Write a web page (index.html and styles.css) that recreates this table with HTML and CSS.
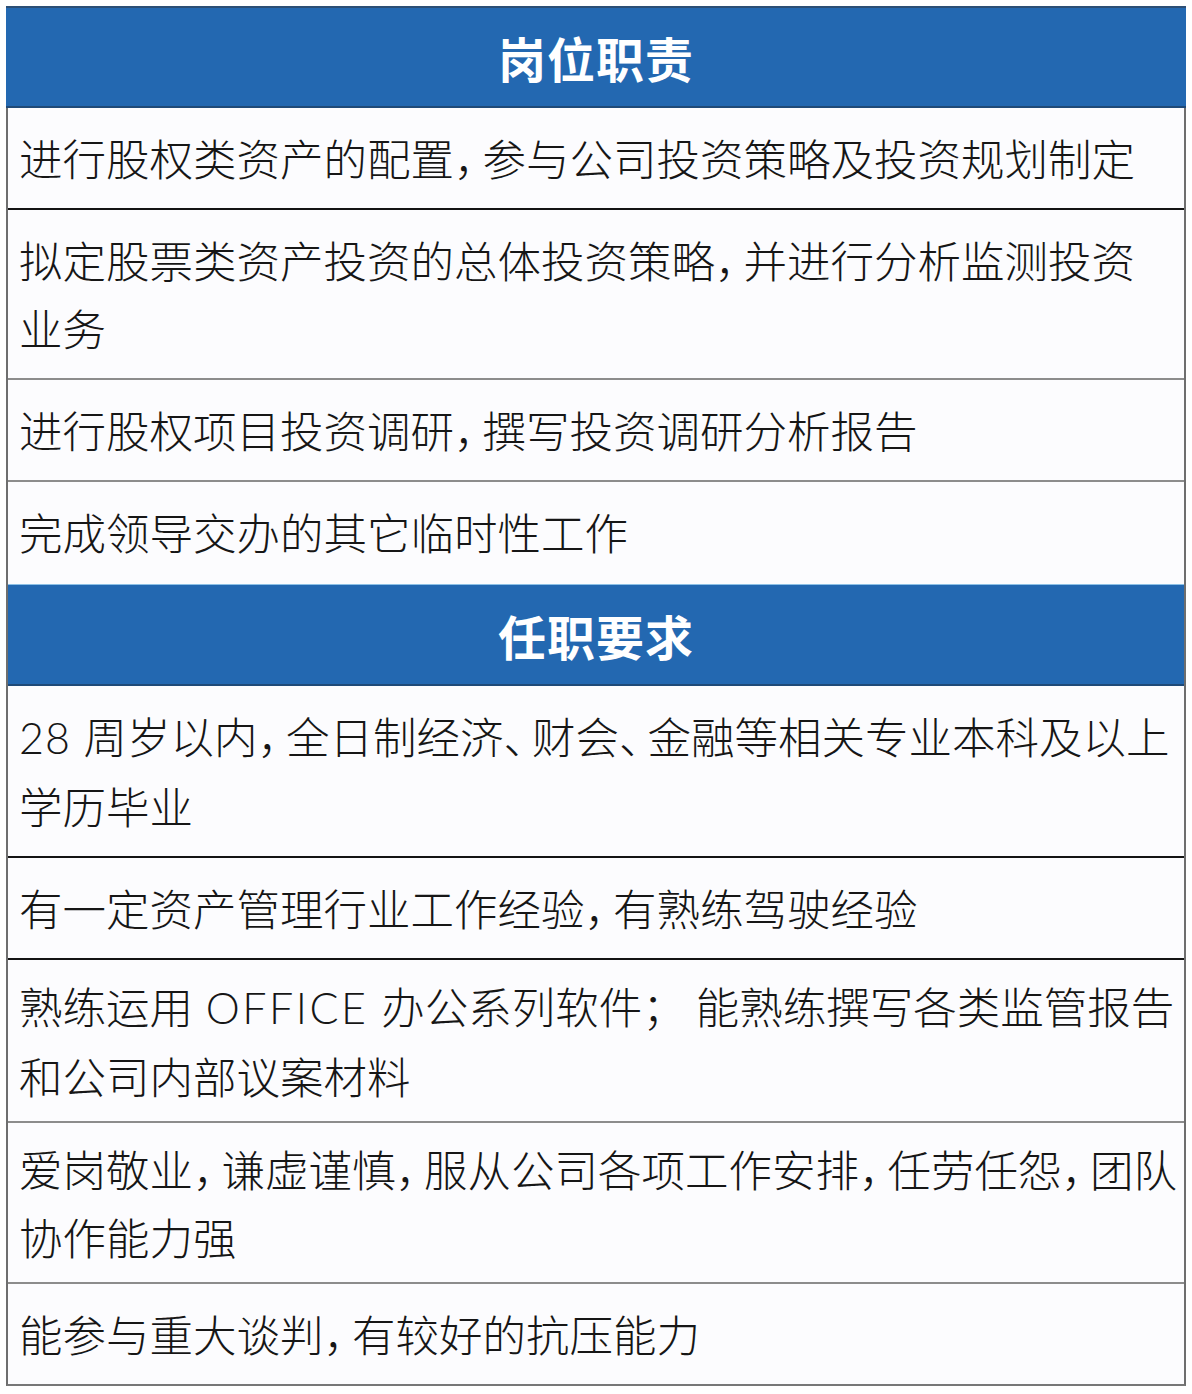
FILE: index.html
```html
<!DOCTYPE html>
<html lang="zh-CN">
<head>
<meta charset="utf-8">
<title>岗位职责 / 任职要求</title>
<link rel="stylesheet" href="styles.css">
</head>
<body>
<div class="sheet">
  <div class="head head-first">岗位职责</div>
  <div class="cell line-dark">进行股权类资产的配置<span class="pc">，</span>参与公司投资策略及投资规划制定</div>
  <div class="cell line-grey">拟定股票类资产投资的总体投资策略<span class="pc">，</span>并进行分析监测投资<br>业务</div>
  <div class="cell line-grey">进行股权项目投资调研<span class="pc">，</span>撰写投资调研分析报告</div>
  <div class="cell line-light">完成领导交办的其它临时性工作</div>
  <div class="head">任职要求</div>
  <div class="cell line-dark"><span class="lat">28 </span>周岁以内<span class="pc">，</span>全日制经济<span class="pc">、</span>财会<span class="pc">、</span>金融等相关专业本科及以上<br>学历毕业</div>
  <div class="cell line-dark">有一定资产管理行业工作经验<span class="pc">，</span>有熟练驾驶经验</div>
  <div class="cell line-grey tight">熟练运用<span class="lat"> <span class="caps">OFFICE</span> </span>办公系列软件<span class="sc">；</span>能熟练撰写各类监管报告<br>和公司内部议案材料</div>
  <div class="cell line-grey tight">爱岗敬业<span class="pc">，</span>谦虚谨慎<span class="pc">，</span>服从公司各项工作安排<span class="pc">，</span>任劳任怨<span class="pc">，</span>团队<br>协作能力强</div>
  <div class="cell cell-last">能参与重大谈判<span class="pc">，</span>有较好的抗压能力</div>
</div>
</body>
</html>
```

FILE: styles.css
```css
html, body {
  margin: 0;
  padding: 0;
  background: #ffffff;
}

body {
  font-family: "Noto Sans CJK SC Light", "Noto Sans CJK SC DemiLight", "Noto Sans CJK SC", "Noto Sans", sans-serif;
  color: #161616;
}

.sheet {
  width: 1180px;
  margin: 6px 0 0 6px;
  border-left: 2px solid #6e6e6e;
  border-right: 2px solid #6e6e6e;
  border-bottom: 2px solid #777777;
  box-sizing: border-box;
  background: #fcfcfe;
}

.head {
  height: 102px;
  box-sizing: border-box;
  background: #2368b1;
  color: #ffffff;
  font-family: "Noto Sans CJK SC", sans-serif;
  font-size: 48px;
  font-weight: 700;
  letter-spacing: 1px;
  display: flex;
  align-items: center;
  justify-content: center;
  border-bottom: 2px solid #1f4a78;
  border-top: 1px solid #8cc0e6;
}

.head-first {
  border-top: 2px solid #2c4f76;
  margin-left: -2px;
  margin-right: -2px;
}

.cell {
  padding: 16px 0 16px 11px;
  font-size: 43.5px;
  font-weight: 300;
  line-height: 68px;
  white-space: nowrap;
  border-bottom: 2px solid #8a8a8a;
}

.tight {
  padding-top: 12px;
  padding-bottom: 11px;
}

.pc {
  letter-spacing: -15px;
}

.sc {
  letter-spacing: 10px;
}

.lat {
  font-family: Lato, "Open Sans", "Liberation Sans", sans-serif;
  font-weight: 300;
  font-size: 43px;
  letter-spacing: 1px;
}

.caps {
  letter-spacing: 2.5px;
}

.line-dark {
  border-bottom-color: #141414;
}

.line-grey {
  border-bottom-color: #8c8c8c;
}

.line-light {
  border-bottom: 0;
  padding-bottom: 18px;
}

.cell-last {
  border-bottom: 0;
}
```
